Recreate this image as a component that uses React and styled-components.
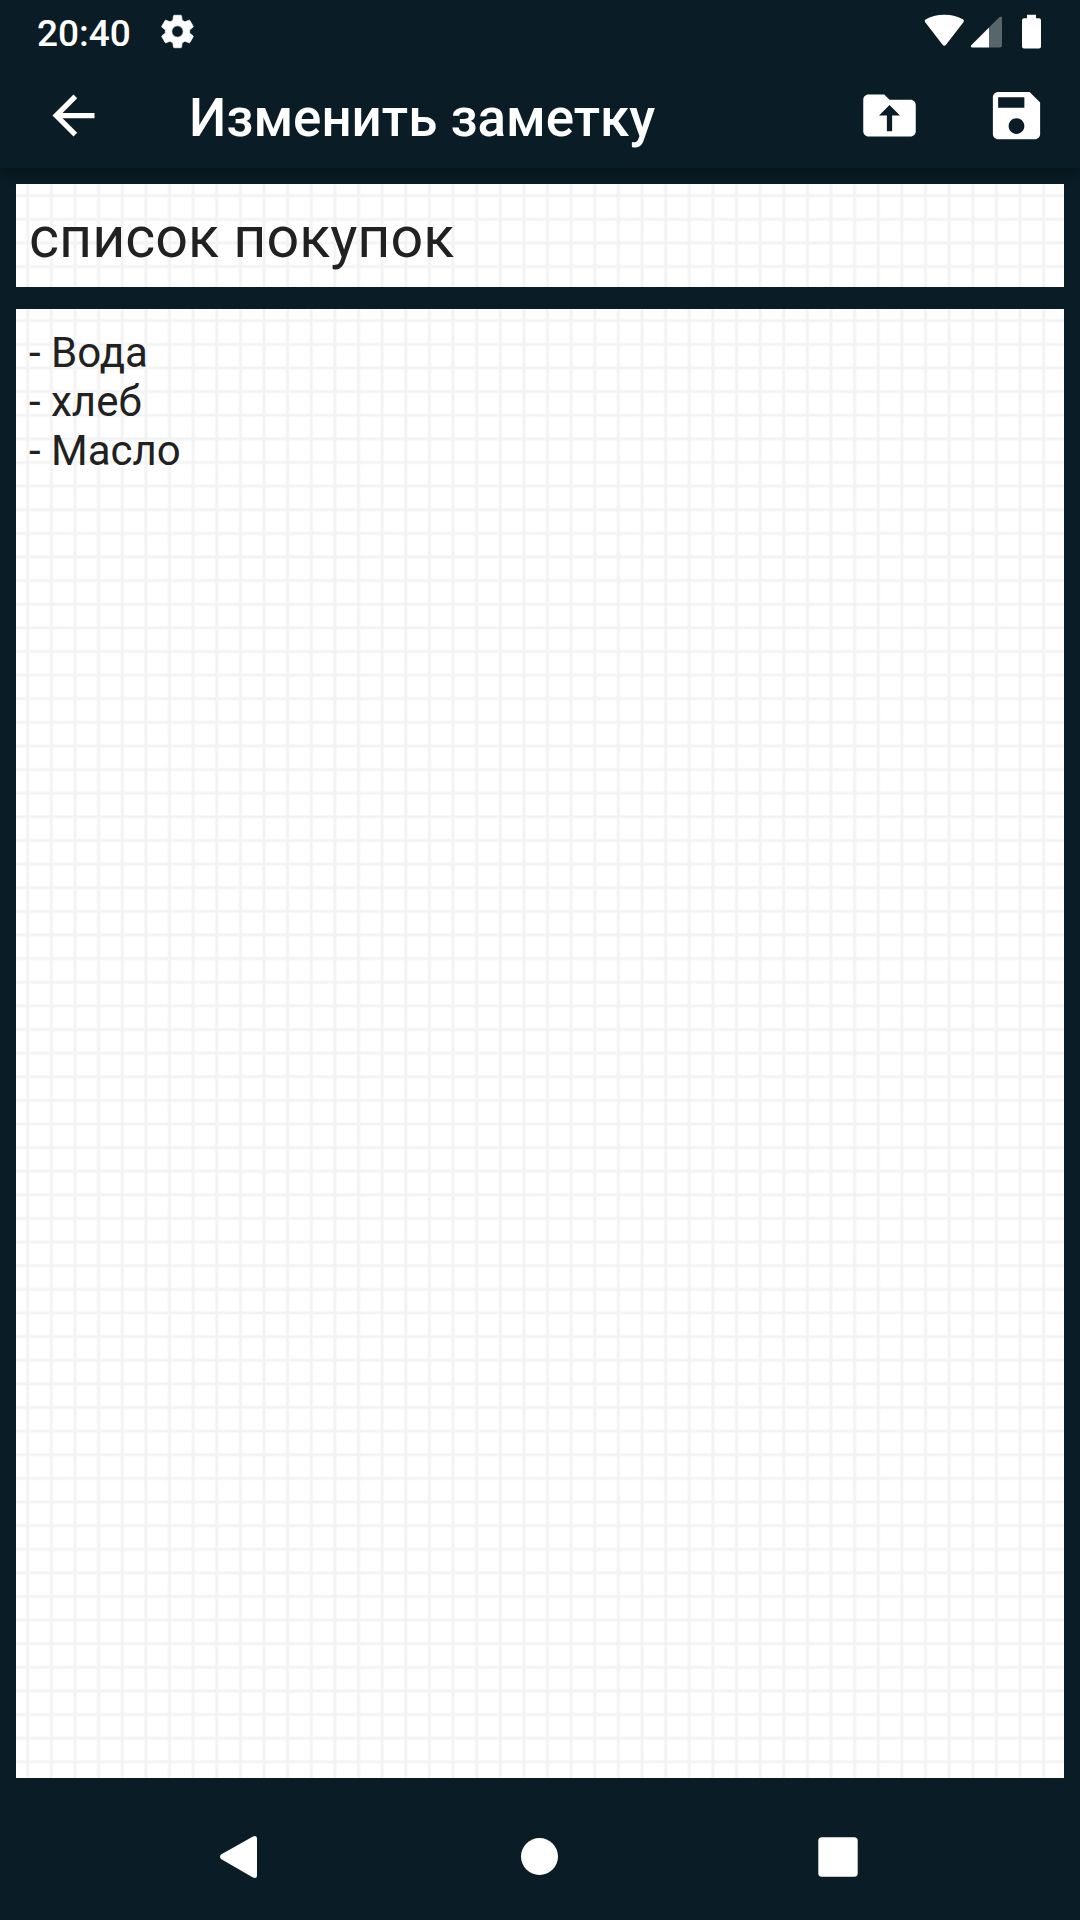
import React from 'react';
import styled, { createGlobalStyle } from 'styled-components';

const GlobalStyle = createGlobalStyle`
  body {
    margin: 0;
    background: #0a1c25;
    font-family: Roboto, sans-serif;
  }
`;

const Screen = styled.div`
  display: flex;
  flex-direction: column;
  width: 1080px;
  height: 1920px;
  background: #0a1c25;
  overflow: hidden;
`;

const Header = styled.header`
  height: 168px;
  background: #0a1c25;
  box-shadow: 0 5px 11px rgba(0, 0, 0, 0.3);
`;

const StatusBar = styled.div`
  display: flex;
  align-items: center;
  box-sizing: border-box;
  height: 63px;
  padding: 0 38px 0 37px;
`;

const Clock = styled.span`
  width: 121px;
  padding-top: 5px;
  font-size: 37px;
  font-weight: 500;
  line-height: 44px;
  color: #fff;
`;

const StatusIcons = styled.div`
  display: flex;
  margin-left: auto;
`;

const Toolbar = styled.div`
  display: flex;
  align-items: center;
  box-sizing: border-box;
  height: 105px;
  padding: 0 32px 0 42px;
`;

const Title = styled.h1`
  flex: 1;
  margin: 0;
  padding: 5px 0 0 84px;
  font-size: 52.9px;
  font-weight: 500;
  line-height: 62px;
  color: #fff;
`;

const IconButton = styled.button`
  display: flex;
  margin: 0 0 0 ${(props) => props.$gap || 0}px;
  padding: 0;
  border: none;
  background: none;
`;

const Icon = styled.svg`
  display: block;
  width: ${(props) => props.$size}px;
  height: ${(props) => props.$size}px;
  fill: #fff;
`;

const Notes = styled.main`
  display: flex;
  flex: 1;
  flex-direction: column;
  gap: 22px;
  padding: 16px 16px 0;
`;

const Paper = styled.div`
  box-sizing: border-box;
  height: ${(props) => props.$height}px;
  padding: ${(props) => props.$top}px 13px 0;
  background-color: #fff;
  background-image:
    linear-gradient(90deg, transparent 9.6px, #f3f3f3 11px, #f3f3f3 12.6px, transparent 14px),
    linear-gradient(transparent 9.6px, #f3f3f3 11px, #f3f3f3 12.4px, transparent 13.8px);
  background-size: 23.625px 23.625px;
  color: #212121;
  font-size: ${(props) => props.$font}px;
  line-height: ${(props) => props.$line}px;
  white-space: pre-line;
`;

const NavBar = styled.nav`
  display: flex;
  height: 142px;
`;

const StatusSvg = styled.svg`
  display: block;
  width: 120px;
  height: 36px;
  fill: #fff;
`;

const NavSvg = styled.svg`
  display: block;
  width: 100%;
  height: 142px;
  fill: #fff;
`;

const NavButton = styled.button`
  width: ${(props) => props.$width}px;
  padding: 0;
  border: none;
  background: none;
`;

const note = '- Вода\n- хлеб\n- Масло';

export default function App() {
  return (
    <>
      <GlobalStyle />
      <Screen>
        <Header>
          <StatusBar>
            <Clock>20:40</Clock>
            <Icon $size={39} viewBox="0 0 24 24" stroke="#fff" strokeWidth=".4">
              <path d="M19.43 12.98c.04-.32.07-.64.07-.98s-.03-.66-.07-.98l2.11-1.65c.19-.15.24-.42.12-.64l-2-3.46c-.12-.22-.39-.3-.61-.22l-2.49 1c-.52-.4-1.08-.73-1.69-.98l-.38-2.65C14.46 2.18 14.25 2 14 2h-4c-.25 0-.46.18-.49.42l-.38 2.65c-.61.25-1.17.59-1.69.98l-2.49-1c-.23-.09-.49 0-.61.22l-2 3.46c-.13.22-.07.49.12.64l2.11 1.65c-.04.32-.07.65-.07.98s.03.66.07.98l-2.11 1.65c-.19.15-.24.42-.12.64l2 3.46c.12.22.39.3.61.22l2.49-1c.52.4 1.08.73 1.69.98l.38 2.65c.03.24.24.42.49.42h4c.25 0 .46-.18.49-.42l.38-2.65c.61-.25 1.17-.59 1.69-.98l2.49 1c.23.09.49 0 .61-.22l2-3.46c.12-.22.07-.49-.12-.64l-2.11-1.65zM12 15.5c-1.93 0-3.5-1.57-3.5-3.5s1.57-3.5 3.5-3.5 3.5 1.57 3.5 3.5-1.57 3.5-3.5 3.5z" />
            </Icon>
            <StatusIcons>
              <StatusSvg viewBox="0 0 120 36">
                {/* wifi */}
                <path d="M3.2 8.2Q2 6.8 3.5 5.6Q11 .8 22.3 .8T41.2 5.6Q42.6 6.8 41.4 8.2L24 30.8Q22.3 32.8 20.6 30.8Z" />
                {/* mobile signal */}
                <path d="M67 13.5V33.5H50.5Q47.7 33.3 49.5 31Z" />
                <path d="M67 13.5L77.5 3Q80 1.3 80 4.5V31.5Q80 33.5 78 33.5H67Z" fillOpacity=".32" />
                {/* battery */}
                <path d="M105 .8H114V4.3H117Q119 4.3 119 6.3V32.5Q119 34.5 117 34.5H102Q100 34.5 100 32.5V6.3Q100 4.3 102 4.3H105Z" />
              </StatusSvg>
            </StatusIcons>
          </StatusBar>
          <Toolbar>
            <IconButton>
              <Icon $size={63} viewBox="0 0 24 24">
                <path d="M20 11H7.83l5.59-5.59L12 4l-8 8 8 8 1.41-1.41L7.83 13H20v-2z" />
              </Icon>
            </IconButton>
            <Title>Изменить заметку</Title>
            <IconButton>
              <Icon $size={63} viewBox="0 0 24 24">
                <path d="M20 6h-8l-2-2H4c-1.1 0-2 .9-2 2v12c0 1.1.9 2 2 2h16c1.1 0 2-.9 2-2V8c0-1.1-.9-2-2-2zM13 12v6h-2v-6H8l4-4 4 4h-3z" />
              </Icon>
            </IconButton>
            <IconButton $gap={64}>
              <Icon $size={63} viewBox="0 0 24 24">
                <path d="M17 3H5c-1.11 0-2 .9-2 2v14c0 1.1.89 2 2 2h14c1.1 0 2-.9 2-2V7l-4-4zm-5 16c-1.66 0-3-1.34-3-3s1.34-3 3-3 3 1.34 3 3-1.34 3-3 3zm3-10H5V5h10v4z" />
              </Icon>
            </IconButton>
          </Toolbar>
        </Header>
        <Notes>
          <Paper $height={103} $top={20} $font={57.4} $line={68}>список покупок</Paper>
          <Paper $height={1469} $top={19} $font={42} $line={49}>{note}</Paper>
        </Notes>
        <NavBar>
          <NavButton $width={400}>
            <NavSvg viewBox="0 0 400 142">
              <path d="M221 76.5Q219 78.8 221 81L253 99.6Q257 101 257 97.5V60.5Q257 57 253 58.4Z" />
            </NavSvg>
          </NavButton>
          <NavButton $width={280}>
            <NavSvg viewBox="0 0 280 142">
              <circle cx="139.5" cy="78.5" r="18.5" />
            </NavSvg>
          </NavButton>
          <NavButton $width={400}>
            <NavSvg viewBox="0 0 400 142">
              <rect x="138.3" y="59.3" width="39.4" height="39.4" rx="3.5" />
            </NavSvg>
          </NavButton>
        </NavBar>
      </Screen>
    </>
  );
}
